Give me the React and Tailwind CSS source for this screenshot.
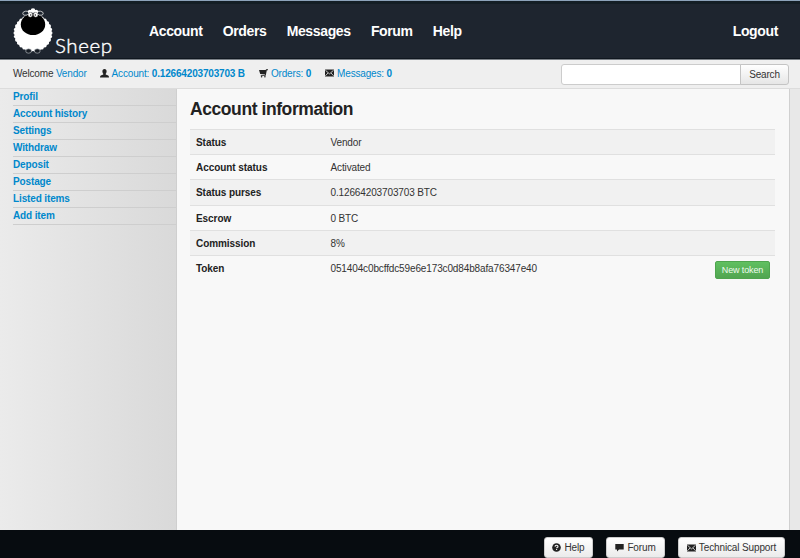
const FONT = "font-['Liberation_Sans',Arial,sans-serif]";

function SheepMark() {
  const puffs = Array.from({ length: 30 }, (_, i) => {
    const a = (i / 30) * Math.PI * 2;
    return [20 + Math.cos(a) * 17.8, 25 + Math.sin(a) * 17.2];
  });
  return (
    <svg width="42" height="48" viewBox="0 0 42 48" className="block shrink-0">
      <g fill="#fff">
        <ellipse cx="20" cy="25" rx="18.6" ry="18" />
        {puffs.map(([x, y], i) => (
          <circle key={i} cx={x} cy={y} r="1.7" />
        ))}
      </g>
      <g fill="#161c24" stroke="#c8ccd0" strokeWidth="0.6">
        <ellipse cx="15.6" cy="43" rx="2.9" ry="2.2" />
        <ellipse cx="24.3" cy="43" rx="2.9" ry="2.2" />
      </g>
      <ellipse cx="20" cy="16.4" rx="12.2" ry="10.7" fill="#000" />
      <g fill="#1c242e" stroke="#ddd" strokeWidth="0.8">
        <ellipse cx="12.8" cy="5.2" rx="3.1" ry="2" transform="rotate(-12 12.8 5.2)" />
        <ellipse cx="27.2" cy="5.2" rx="3.1" ry="2" transform="rotate(12 27.2 5.2)" />
      </g>
      <g fill="#fff">
        <circle cx="16.8" cy="3.8" r="2" />
        <circle cx="20" cy="2.6" r="2.3" />
        <circle cx="23.2" cy="3.8" r="2" />
      </g>
      <g fill="#fff" stroke="#333" strokeWidth="0.4">
        <circle cx="17.3" cy="6.8" r="2.4" />
        <circle cx="22.7" cy="6.8" r="2.4" />
      </g>
      <circle cx="17.7" cy="7" r="0.7" fill="#111" />
      <circle cx="22.3" cy="7" r="0.7" fill="#111" />
    </svg>
  );
}

function UserIcon() {
  return (
    <svg width="9" height="9" viewBox="0 0 9 9" className="block" fill="#222">
      <path d="M4.5 0C5.9 0 6.7 1 6.6 2.4C6.5 3.6 6.1 4.2 5.7 4.7V5.5L8.2 6.6Q9 7.1 9 8.6H0Q0 7.1 .8 6.6L3.3 5.5V4.7C2.9 4.2 2.5 3.6 2.4 2.4C2.3 1 3.1 0 4.5 0Z" />
    </svg>
  );
}

function CartIcon() {
  return (
    <svg width="9" height="9" viewBox="0 0 9 9" className="block">
      <path d="M0 1H6.7L7.1 .3H9V1.2H7.8L6.7 6.8H1.8V6H5.9L6 5.4L1.2 4.9Z" fill="#222" />
      <circle cx="2.6" cy="7.8" r=".8" fill="#222" />
      <circle cx="5.9" cy="7.8" r=".8" fill="#222" />
    </svg>
  );
}

function MailIcon() {
  return (
    <svg width="9" height="8" viewBox="0 0 9 8" className="block">
      <path d="M0 .5H9V7.5H0Z" fill="#222" />
      <path d="M.4 1.2L4.5 4.9L8.6 1.2M.4 6.8L3 4M8.6 6.8L6 4" fill="none" stroke="#efefef" strokeWidth=".8" />
    </svg>
  );
}

function HelpIcon() {
  return (
    <svg width="9" height="9" viewBox="0 0 9 9" className="block">
      <circle cx="4.5" cy="4.5" r="4.3" fill="#222" />
      <path d="M3 3.6Q3.1 2.2 4.5 2.2Q6 2.2 6 3.4Q6 4.1 5.2 4.5Q4.6 4.8 4.6 5.3M4.6 6V7.1" fill="none" stroke="#f5f5f5" strokeWidth="1.1" />
    </svg>
  );
}

function ChatIcon() {
  return (
    <svg width="9" height="9" viewBox="0 0 9 9" className="block">
      <path d="M.3 1H8.7V6.4H4L2 8.5V6.4H.3Z" fill="#222" />
    </svg>
  );
}

const NAV = ["Account", "Orders", "Messages", "Forum", "Help"];
const SIDE = ["Profil", "Account history", "Settings", "Withdraw", "Deposit", "Postage", "Listed items", "Add item"];
const ROWS = [
  ["Status", "Vendor"],
  ["Account status", "Activated"],
  ["Status purses", "0.12664203703703 BTC"],
  ["Escrow", "0 BTC"],
  ["Commission", "8%"],
  ["Token", "051404c0bcffdc59e6e173c0d84b8afa76347e40"],
];

function FooterButton({ icon, label, width }) {
  return (
    <button className={`flex h-[21px] items-center justify-center gap-[3px] rounded-[3px] border border-[#ccc] bg-linear-to-b from-white to-[#ebebeb] leading-[19px] text-[#333] ${width}`}>
      {icon}
      <span>{label}</span>
    </button>
  );
}

export default function App() {
  return (
    <div className={`flex h-[558px] w-[800px] flex-col overflow-hidden bg-[#e8e8e8] text-[10px] leading-[15px] tracking-[-0.13px] text-[#333] ${FONT}`}>
      <header className="flex h-[60px] shrink-0 border-t border-b border-t-[#8da3ba] border-b-[#7b8187] bg-[#1e252f] shadow-[inset_0_3px_0_#141e25,inset_0_-1px_0_#10171f]">
        <div className="flex w-[149px] pt-[7px] pl-[13px]">
          <SheepMark />
          <span className="mt-[25px] font-['Lato',sans-serif] text-[20.5px] leading-[24px] font-light tracking-[0.6px] text-white [-webkit-text-stroke:0.4px_white]">Sheep</span>
        </div>
        <nav className="flex flex-1 gap-[20.2px] pt-[20px] text-[14px] leading-[20px] font-bold tracking-[-0.36px] text-white">
          {NAV.map((n) => (
            <a key={n}>{n}</a>
          ))}
          <a className="mr-[22px] ml-auto">Logout</a>
        </nav>
      </header>

      <div className="flex h-[29px] shrink-0 items-start border-b border-[#dcdcdc] bg-[#efefef] pl-[13px] tracking-[-0.17px] text-[#0088cc]">
        <div className="flex h-[26px] items-center">
          <span><span className="text-[#333]">Welcome</span> Vendor</span>
          <span className="ml-[13px] flex items-center gap-[3px]"><UserIcon /><span>Account: <b>0.12664203703703 B</b></span></span>
          <span className="ml-[14px] flex items-center gap-[3px]"><CartIcon /><span>Orders: <b>0</b></span></span>
          <span className="ml-[14px] flex items-center gap-[3px]"><MailIcon /><span>Messages: <b>0</b></span></span>
        </div>
        <div className="mt-[4px] mr-[11px] ml-auto flex h-[21px]">
          <input className="w-[180px] rounded-l-[3px] border border-[#ccc] bg-white" />
          <button className="-ml-px w-[49px] rounded-r-[3px] border border-[#c4c4c4] bg-linear-to-b from-white to-[#e6e6e6] leading-[18px] text-[#333]">Search</button>
        </div>
      </div>

      <div className="flex min-h-0 flex-1">
        <aside className="w-[177px] shrink-0 border-r border-[#cfcfcf] bg-linear-to-r from-[#ebebeb] to-[#d9d9d9] pl-[13px]">
          {SIDE.map((s) => (
            <a key={s} className="block h-[17px] border-b border-[#cecece] leading-[16px] font-bold text-[#0088cc]">{s}</a>
          ))}
        </aside>
        <main className="w-[613px] shrink-0 border-r border-[#d0d0d0] bg-[#f8f8f8] pr-[14px] pl-[13px]">
          <h1 className="h-[40px] pt-[5px] text-[17.5px] leading-[30px] font-bold tracking-[-0.42px] text-[#222]">Account information</h1>
          <div>
            {ROWS.map(([k, v], i) => (
              <div key={k} className={`flex h-[25.2px] border-t border-[#e0e0e0] pt-[5px] pl-[6px] ${i % 2 ? "" : "bg-[#f1f1f1]"}`}>
                <div className="w-[134.5px] font-bold tracking-[-0.06px] text-[#222]">{k}</div>
                <div>{v}</div>
                {k === "Token" && (
                  <button className="mr-[5px] ml-auto h-[18px] w-[55px] shrink-0 rounded-[2px] border border-[#4ea44e] bg-linear-to-b from-[#60c060] to-[#51a551] text-[9px] leading-[16px] text-[#eefaee]">New token</button>
                )}
              </div>
            ))}
          </div>
        </main>
      </div>

      <footer className="flex h-[28px] shrink-0 items-start justify-end gap-[13px] bg-[#070c10] pt-[7px] pr-[15px]">
        <FooterButton icon={<HelpIcon />} label="Help" width="w-[49px]" />
        <FooterButton icon={<ChatIcon />} label="Forum" width="w-[59px]" />
        <FooterButton icon={<MailIcon />} label="Technical Support" width="w-[107px]" />
      </footer>
    </div>
  );
}
